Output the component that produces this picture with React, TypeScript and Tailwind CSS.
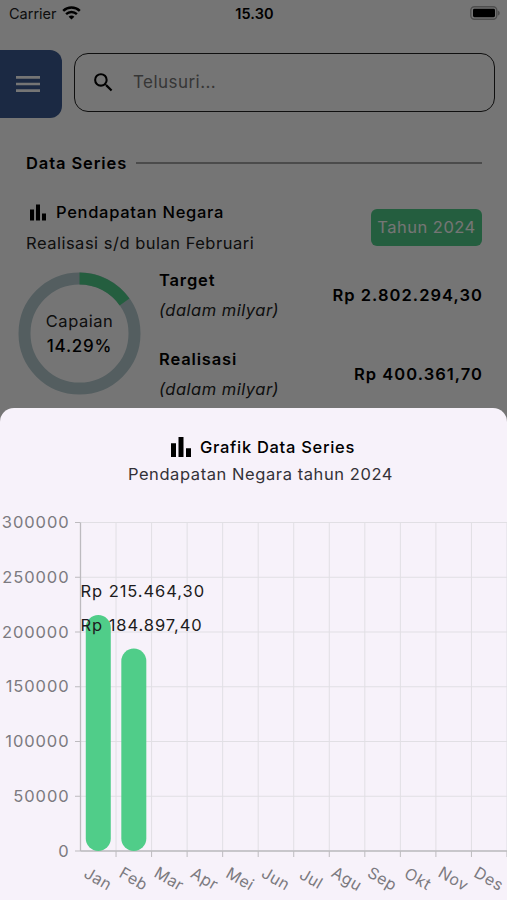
import React from 'react';
import { MdBarChart, MdMenu, MdSearch } from 'react-icons/md';

interface MonthValue {
  month: string;
  value?: number;
  label?: string;
}

interface AmountRowProps {
  title: string;
  amount: string;
}

const months: MonthValue[] = [
  { month: 'Jan', value: 215464.3, label: 'Rp 215.464,30' },
  { month: 'Feb', value: 184897.4, label: 'Rp 184.897,40' },
  { month: 'Mar' },
  { month: 'Apr' },
  { month: 'Mei' },
  { month: 'Jun' },
  { month: 'Jul' },
  { month: 'Agu' },
  { month: 'Sep' },
  { month: 'Okt' },
  { month: 'Nov' },
  { month: 'Des' },
];

const yTicks = [300000, 250000, 200000, 150000, 100000, 50000, 0];

const MAX_VALUE = 300000;
const PLOT_LEFT = 80.5;
const PLOT_TOP = 22.5;
const PLOT_HEIGHT = 328.5;
const STEP = 35.54;
const BAR_WIDTH = 25;

const yOf = (value: number) => PLOT_TOP + PLOT_HEIGHT * (1 - value / MAX_VALUE);
const xOf = (index: number) => PLOT_LEFT + STEP * index;

function StatusBar() {
  return (
    <div className="grid h-[28px] grid-cols-3 items-center pl-[9px] pr-[6px] text-black">
      <div className="flex items-center gap-[5px]">
        <span className="text-[14.5px] text-[#222]">Carrier</span>
        <svg className="-mt-[2px]" width="19" height="14" viewBox="0 0 19 14" fill="none" stroke="black">
          <path d="M1.2 4.8C5.8.4 13.2.4 17.8 4.8" strokeWidth="2.5" />
          <path d="M4.1 8.1C7.1 5.2 11.9 5.2 14.9 8.1" strokeWidth="2.4" />
          <path d="M9.5 13.6 6.6 10.7C8.2 9.2 10.8 9.2 12.4 10.7Z" fill="black" stroke="none" />
        </svg>
      </div>
      <span className="pr-[1px] text-center text-[14.5px] font-semibold tracking-[0.1px]">15.30</span>
      <svg className="-mt-[2px] justify-self-end" width="31" height="14" viewBox="0 0 31 14">
        <rect x=".8" y=".8" width="26" height="12.4" rx="3.6" fill="none" stroke="#aaa" strokeWidth="1.4" />
        <rect x="3" y="2.8" width="22" height="8.4" rx="1.4" fill="black" />
        <path d="M27.8 4.4c2.6.9 2.6 4.3 0 5.2z" fill="#aaa" />
      </svg>
    </div>
  );
}

function SearchHeader() {
  return (
    <div className="mt-[22px] flex h-[68px] items-start gap-3">
      <button className="flex h-[68px] w-[62px] items-center justify-center rounded-r-xl bg-[#3b5b92] pr-[7px] text-white">
        <MdMenu className="h-[32px] w-[32px]" />
      </button>
      <div className="mt-[3px] mr-3 flex h-[59px] flex-1 items-center rounded-[14px] border-[1.5px] border-[#222] pl-[16px]">
        <MdSearch className="h-[25px] w-[25px] text-black" />
        <span className="mt-[1px] ml-[17px] text-[17px] tracking-[0.45px] text-[#777]">Telusuri...</span>
      </div>
    </div>
  );
}

function ProgressRing() {
  const radius = 55;
  const length = 2 * Math.PI * radius;

  return (
    <div className="relative h-[123px] w-[123px] shrink-0">
      <svg width="123" height="123" viewBox="0 0 123 123" fill="none" strokeWidth="12">
        <circle cx="61.5" cy="61.5" r={radius} stroke="#b8cdd2" />
        <circle
          cx="61.5"
          cy="61.5"
          r={radius}
          stroke="#50cd89"
          strokeDasharray={`${length * 0.1525} ${length}`}
          transform="rotate(-90 61.5 61.5)"
        />
      </svg>
      <div className="absolute inset-0 flex flex-col items-center justify-center text-[16.5px] leading-[25px]">
        <span>Capaian</span>
        <span className="text-[17px] font-medium tracking-[0.75px] text-black">14.29%</span>
      </div>
    </div>
  );
}

function AmountRow({ title, amount }: AmountRowProps) {
  return (
    <div className="flex h-[79px] items-start justify-between">
      <div className="flex flex-col leading-[30px]">
        <span className="text-[16.5px] font-semibold tracking-[0.85px] text-black">{title}</span>
        <span className="text-[16.5px] italic">(dalam milyar)</span>
      </div>
      <span className="mt-[15px] -mr-[1px] text-[16.5px] leading-[30px] font-semibold tracking-[1.05px] text-black">{amount}</span>
    </div>
  );
}

function SeriesSummary() {
  return (
    <div className="mt-[33px] pr-[25px] pl-[26px] tracking-[0.5px]">
      <div className="flex h-6 items-center gap-[9px]">
        <h2 className="text-[16.5px] font-semibold tracking-[0.9px] text-black">Data Series</h2>
        <div className="h-[2px] flex-1 bg-[#a3a3a3]" />
      </div>

      <div className="mt-[22px] flex items-center justify-between">
        <div>
          <div className="flex h-[31px] items-center gap-[6px]">
            <MdBarChart className="h-[25px] w-[24px] text-black" />
            <span className="text-[16.5px] font-medium tracking-[0.7px] text-black">Pendapatan Negara</span>
          </div>
          <p className="text-[16.5px] leading-[30px]">Realisasi s/d bulan Februari</p>
        </div>
        <span className="flex h-[37px] w-[111px] items-center justify-center rounded-md bg-[#50cd89] text-[16.5px] text-white">
          Tahun 2024
        </span>
      </div>

      <div className="mt-[7px] -ml-[8px] flex gap-[18px]">
        <div className="mt-[7px]">
          <ProgressRing />
        </div>
        <div className="flex-1">
          <AmountRow title="Target" amount="Rp 2.802.294,30" />
          <AmountRow title="Realisasi" amount="Rp 400.361,70" />
        </div>
      </div>
    </div>
  );
}

function SeriesChart() {
  const bottom = yOf(0);

  return (
    <svg className="block" width="507" height="400" viewBox="0 0 507 400" fontSize="16.5">
      {/* grid */}
      {yTicks.map((tick) => (
        <g key={tick}>
          <line x1={PLOT_LEFT} x2="507" y1={yOf(tick)} y2={yOf(tick)} stroke="#e1dfe4" />
          <line x1="75" x2={PLOT_LEFT} y1={yOf(tick)} y2={yOf(tick)} stroke="#bdbbbf" />
          <text x="69.5" y={yOf(tick) + 5.5} textAnchor="end" fill="#7c7a80" letterSpacing="0.9">
            {tick}
          </text>
        </g>
      ))}
      {Array.from({ length: 13 }, (_, i) => (
        <g key={i}>
          <line x1={xOf(i)} x2={xOf(i)} y1={PLOT_TOP} y2={bottom} stroke="#e1dfe4" />
          {i > 0 && <line x1={xOf(i)} x2={xOf(i)} y1={bottom} y2={bottom + 6} stroke="#bdbbbf" />}
        </g>
      ))}

      {/* axes */}
      <line x1={PLOT_LEFT} x2={PLOT_LEFT} y1={PLOT_TOP} y2={bottom} stroke="#bdbbbf" strokeWidth="1.3" />
      <line x1={PLOT_LEFT} x2="507" y1={bottom} y2={bottom} stroke="#bdbbbf" strokeWidth="1.3" />

      {months.map((item, i) => (
        <g key={item.month}>
          {item.value && (
            <rect
              x={xOf(i) + (STEP - BAR_WIDTH) / 2}
              y={yOf(item.value)}
              width={BAR_WIDTH}
              height={bottom - yOf(item.value)}
              rx={BAR_WIDTH / 2}
              fill="#50cd89"
            />
          )}
          <text
            x="0"
            y="6"
            textAnchor="middle"
            fill="#7c7a80"
            fontSize="16"
            letterSpacing="0.5"
            transform={`translate(${xOf(i) + STEP / 2} 378.5) rotate(30)`}
          >
            {item.month}
          </text>
        </g>
      ))}

      {/* data labels */}
      {months.map((item) =>
        item.value ? (
          <text key={item.month} x="80.5" y={yOf(item.value) - 18} fill="#1d1b20" letterSpacing="0.93">
            {item.label}
          </text>
        ) : null
      )}
    </svg>
  );
}

function ChartSheet() {
  return (
    <div className="absolute inset-x-0 bottom-0 h-[492px] overflow-hidden rounded-t-[14px] bg-[#f7f2fa] tracking-[0.5px]">
      <div className="flex h-[92px] flex-col items-center pt-[24px] pl-[14px] text-[16.5px] leading-[27px]">
        <div className="flex h-[30px] items-center gap-1 text-black">
          <MdBarChart className="h-[30px] w-[30px]" />
          <span className="font-medium tracking-[0.7px]">Grafik Data Series</span>
        </div>
        <p className="-mt-[1px] tracking-[0.58px] text-[#333137]">Pendapatan Negara tahun 2024</p>
      </div>
      <SeriesChart />
    </div>
  );
}

export default function App() {
  return (
    <div className="relative h-[900px] w-[507px] overflow-hidden bg-white font-['Inter',sans-serif] text-[#222]">
      <StatusBar />
      <SearchHeader />
      <SeriesSummary />
      <div className="absolute inset-0 bg-black/54" />
      <ChartSheet />
    </div>
  );
}
